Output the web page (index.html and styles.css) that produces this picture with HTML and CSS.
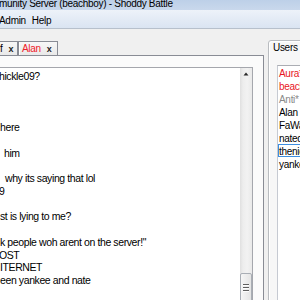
FILE: index.html
```html
<!DOCTYPE html>
<html>
<head>
<meta charset="utf-8">
<link rel="stylesheet" href="styles.css">
</head>
<body>
<div class="window">
  <div class="titlebar">munity Server (beachboy) - Shoddy Battle</div>
  <div class="menubar">
    <span class="menu-item">Admin</span>
    <span class="menu-item">Help</span>
  </div>
  <div class="main">
    <div class="left">
      <div class="tabs">
        <div class="tab tab-first"><span class="tab-label">f</span><span class="tab-close">x</span></div>
        <div class="tab tab-alert"><span class="tab-label">Alan</span><span class="tab-close">x</span></div>
      </div>
      <div class="tab-page">
        <div class="chat">
          <div class="chat-text">
            <div class="line indent-clip">hickle09?</div>
            <div class="line"></div>
            <div class="line"></div>
            <div class="line"></div>
            <div class="line">here</div>
            <div class="line"></div>
            <div class="line indent-4">him</div>
            <div class="line"></div>
            <div class="line indent-5">why its saying that lol</div>
            <div class="line indent-clip">9</div>
            <div class="line"></div>
            <div class="line">st is lying to me?</div>
            <div class="line"></div>
            <div class="line">k people woh arent on the server!"</div>
            <div class="line indent-clip">OST</div>
            <div class="line">ITERNET</div>
            <div class="line">een yankee and nate</div>
          </div>
          <div class="scrollbar">
            <div class="scroll-btn">
              <svg width="12" height="12" viewBox="0 0 12 12"><polygon points="3.5,7.5 6,4.5 8.5,7.5" fill="#2a2a2a"/></svg>
            </div>
            <div class="scroll-track">
              <div class="scroll-thumb"><div class="grip"></div></div>
            </div>
          </div>
        </div>
      </div>
    </div>
    <div class="right">
      <div class="groupbox">
        <div class="group-title">Users</div>
        <div class="listbox">
          <div class="user red">Aura*</div>
          <div class="user red">beachboy</div>
          <div class="user gray">Anti*</div>
          <div class="user">Alan</div>
          <div class="user">FaWaZ</div>
          <div class="user">natedogg</div>
          <div class="user focus">thenickle09</div>
          <div class="user">yankeefan</div>
        </div>
      </div>
    </div>
  </div>
</div>
</body>
</html>
```

FILE: styles.css
```css
* {
  box-sizing: border-box;
}

html,
body {
  margin: 0;
  padding: 0;
}

body {
  width: 300px;
  height: 300px;
  overflow: hidden;
  font-family: "Liberation Sans", Arial, sans-serif;
  font-size: 10px;
  letter-spacing: -0.3px;
  color: #000;
  background: #f0f0f0;
}

.window {
  width: 300px;
  height: 300px;
  display: flex;
  flex-direction: column;
  overflow: hidden;
  background: #f0f0f0;
}

.titlebar {
  flex: none;
  height: 10px;
  line-height: 8px;
  text-indent: -1px;
  white-space: nowrap;
  background: linear-gradient(#bdd0e8, #c9d8ec);
}

.menubar {
  flex: none;
  height: 19px;
  display: flex;
  gap: 6px;
  padding-top: 3px;
  line-height: 15px;
  background: linear-gradient(#edf2f9, #dae4f2);
  border-bottom: 1px solid #b7c0cc;
}

.menu-item:first-child {
  margin-left: -1px;
}

.main {
  flex: 1;
  min-height: 0;
  display: flex;
}

.left {
  flex: none;
  width: 264px;
  padding-top: 12px;
  display: flex;
  flex-direction: column;
}

.tabs {
  flex: none;
  height: 14px;
  display: flex;
}

.tab {
  height: 14px;
  display: flex;
  align-items: baseline;
  gap: 6px;
  line-height: 13px;
  border-top: 1px solid #898c95;
  border-right: 1px solid #898c95;
  background: linear-gradient(#f7f7f7, #e9e9e9);
  white-space: nowrap;
}

.tab-first {
  width: 18px;
  padding-left: 0;
}

.tab-alert {
  width: 40px;
  padding-left: 3px;
  border-left: 1px solid #898c95;
  box-shadow: inset 1px 0 #fff;
}

.tab-alert .tab-label {
  color: #f0202a;
}

.tab-close {
  font-size: 9px;
  font-weight: bold;
  color: #1e1e1e;
  letter-spacing: 0;
}

.tab-page {
  flex: 1;
  margin-bottom: -10px;
  display: flex;
  flex-direction: column;
  padding: 11px 10px 0 0;
  border-top: 1px solid #898c95;
  border-right: 1px solid #898c95;
  background: #fbfbfb;
}

.chat {
  flex: 1;
  display: flex;
  border: 1px solid #a5a7ad;
  border-left: none;
  background: #fff;
}

.chat-text {
  flex: 1;
  min-width: 0;
  padding-top: 2px;
  font-size: 10.5px;
  letter-spacing: -0.4px;
  white-space: nowrap;
  overflow: hidden;
}

.line {
  height: 12.75px;
  line-height: 12.75px;
}

.indent-clip {
  text-indent: -1px;
}

.indent-4 {
  padding-left: 4px;
}

.indent-5 {
  padding-left: 5px;
}

.scrollbar {
  flex: none;
  width: 12px;
  display: flex;
  flex-direction: column;
  background: linear-gradient(to right, #e0e0e0, #ededed 25%, #f2f2f2 60%, #e9e9e9);
}

.scroll-btn {
  flex: none;
  height: 12px;
}

.scroll-btn svg {
  display: block;
}

.scroll-track {
  flex: 1;
  overflow: hidden;
}

.scroll-thumb {
  margin-top: 193px;
  height: 40px;
  padding: 10px 0 0 2px;
  border: 1px solid #a9aeb5;
  border-radius: 2px;
  background: linear-gradient(to right, #f6f6f6, #e4e4e4);
}

.grip {
  width: 6px;
  height: 8px;
  background: repeating-linear-gradient(to bottom, #5f5f5f 0 1px, #fdfdfd 1px 2px, transparent 2px 3px);
}

.right {
  flex: none;
  width: 80px;
  margin-left: 4px;
  padding-top: 11px;
  display: flex;
  flex-direction: column;
}

.groupbox {
  flex: 1;
  margin-bottom: -10px;
  display: flex;
  flex-direction: column;
  padding-top: 1px;
  border: 1px solid #b9bcc0;
  border-radius: 3px;
  background: #f7f7f7;
  box-shadow: inset 1px 1px #fff;
}

.group-title {
  padding-left: 4px;
  line-height: 12px;
}

.listbox {
  flex: 1;
  margin: 11px 0 -10px 8px;
  background: #fff;
  border: 1px solid;
  border-color: #abadb3 #dbdfe6 #e3e9ef #c6cad2;
  white-space: nowrap;
  overflow: hidden;
}

.user {
  height: 13px;
  padding-top: 1px;
  line-height: 11px;
  border: 1px solid transparent;
}

.user.focus {
  border-color: #3d8ee0;
}

.red {
  color: #e8161e;
}

.gray {
  color: #8a8a8a;
}
```
